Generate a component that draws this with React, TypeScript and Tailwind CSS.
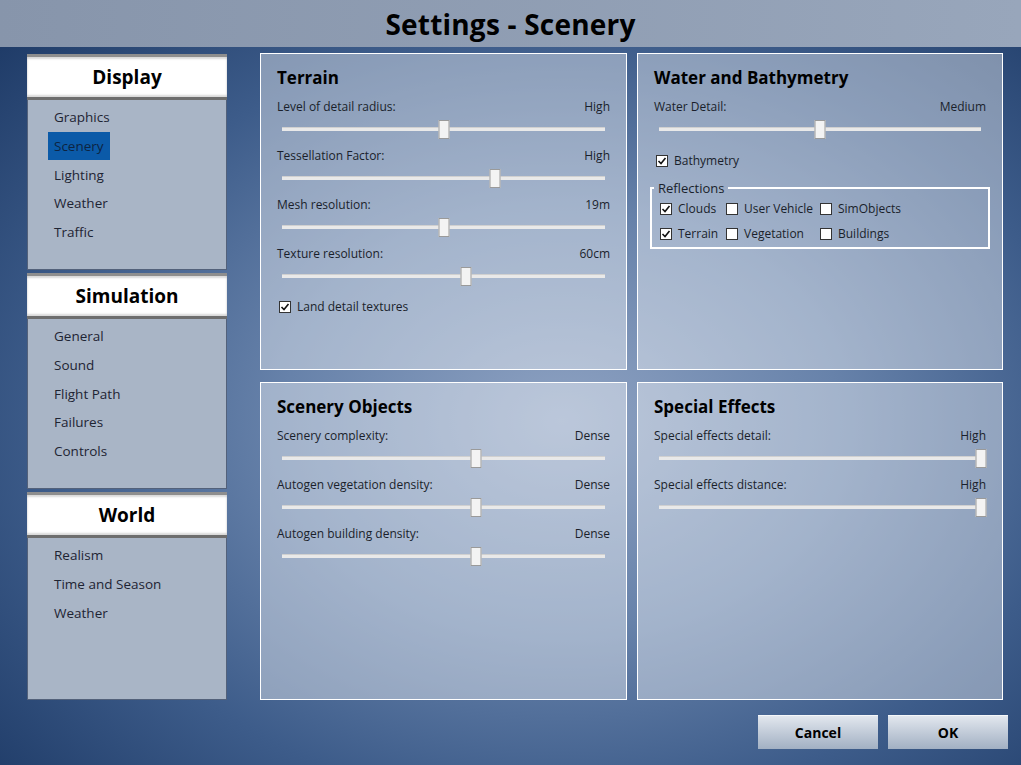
import { ReactNode } from 'react'

const font = { fontFamily: '"Open Sans", "Noto Sans", Arial, sans-serif' }

function SideHeader({ title }: { title: string }) {
  return (
    <div className="h-[46px] flex items-center justify-center bg-white border-t-[3px] border-b-[3px] border-t-[#8e8e8e] border-b-[#6e6e6e] shadow-[inset_0_2px_2px_rgba(0,0,0,0.15),inset_0_-2px_2px_rgba(0,0,0,0.15)]">
      <span className="text-[19px] font-bold text-black">{title}</span>
    </div>
  )
}

function SideList({ items, active, height }: { items: string[]; active?: string; height: string }) {
  return (
    <div className={`${height} bg-[#a9b5c6] border border-[#53617a] border-t-0 pl-[20px] pt-[3px]`}>
      {items.map((it) => (
        <div key={it} className="h-[28.7px] flex items-center">
          <span
            className={`px-[6px] h-[28px] flex items-center text-[13.5px] ${
              it === active ? 'bg-[#0b5aa8] text-[#0d2442]' : 'text-[#1e2433]'
            }`}
          >
            {it}
          </span>
        </div>
      ))}
    </div>
  )
}

function Slider({ label, value, pos }: { label: string; value: string; pos: number }) {
  return (
    <div className="mb-[5px]">
      <div className="h-[16px] flex items-center justify-between text-[12px] text-[#1a1f2b]">
        <span>{label}</span>
        <span>{value}</span>
      </div>
      <div className="relative h-[28px] mx-[5px]">
        <div className="absolute left-0 right-0 top-[12px] h-[4px] bg-[#e9e9e9] border-t border-[#d0d0d0]" />
        <div
          className="absolute top-[5px] w-[11px] h-[19px] bg-[#f3f3f3] border border-[#9a9a9a] -translate-x-1/2"
          style={{ left: `${pos * 100}%` }}
        />
      </div>
    </div>
  )
}

function Check({ label, checked }: { label: string; checked?: boolean }) {
  return (
    <div className="h-[16px] flex items-center gap-[6px] text-[12px] text-[#1a1f2b]">
      <div className="w-[12px] h-[12px] bg-white border border-[#333] flex items-center justify-center">
        {checked && (
          <svg width="10" height="10" viewBox="0 0 10 10">
            <path d="M1.5 5 L4 7.5 L8.5 2" fill="none" stroke="#111" strokeWidth="1.6" />
          </svg>
        )}
      </div>
      <span>{label}</span>
    </div>
  )
}

function Panel({ title, children }: { title: string; children: ReactNode }) {
  return (
    <div className="border border-white bg-white/40 px-[16px] pt-[12px]">
      <div className="h-[24px] flex items-center text-[17px] font-bold text-black">{title}</div>
      <div className="mt-[9px]">{children}</div>
    </div>
  )
}

export default function App() {
  return (
    <div
      className="w-[1021px] h-[765px] flex flex-col overflow-hidden bg-[radial-gradient(ellipse_at_55%_55%,#8ea2c2_0%,#6782aa_35%,#3d5c8a_65%,#1a3662_100%)]"
      style={font}
    >
      <div className="h-[47px] shrink-0 flex items-center justify-center bg-gradient-to-r from-[#8795ab] to-[#98a6bb]">
        <h1 className="text-[28px] font-bold text-black tracking-[0.2px]">Settings - Scenery</h1>
      </div>

      <div className="flex flex-1">
        <div className="ml-[27px] mt-[7px] w-[200px] flex flex-col gap-[3px]">
          <div>
            <SideHeader title="Display" />
            <SideList items={['Graphics', 'Scenery', 'Lighting', 'Weather', 'Traffic']} active="Scenery" height="h-[170px]" />
          </div>
          <div>
            <SideHeader title="Simulation" />
            <SideList items={['General', 'Sound', 'Flight Path', 'Failures', 'Controls']} height="h-[170px]" />
          </div>
          <div>
            <SideHeader title="World" />
            <SideList items={['Realism', 'Time and Season', 'Weather']} height="h-[162px]" />
          </div>
        </div>

        <div className="flex-1 flex flex-col">
          <div className="ml-[33px] mt-[6px] grid grid-cols-[367px_366px] grid-rows-[317px_318px] gap-x-[10px] gap-y-[12px]">
            <Panel title="Terrain">
              <Slider label="Level of detail radius:" value="High" pos={0.5} />
              <Slider label="Tessellation Factor:" value="High" pos={0.66} />
              <Slider label="Mesh resolution:" value="19m" pos={0.5} />
              <Slider label="Texture resolution:" value="60cm" pos={0.57} />
              <div className="mt-[9px] pl-[2px]">
                <Check label="Land detail textures" checked />
              </div>
            </Panel>
            <Panel title="Water and Bathymetry">
              <Slider label="Water Detail:" value="Medium" pos={0.5} />
              <div className="mt-[10px] pl-[2px]">
                <Check label="Bathymetry" checked />
              </div>
              <fieldset className="mt-[10px] -mx-[4px] border-2 border-white h-[70px] pt-[4px]">
                <legend className="ml-[2px] px-[4px] text-[13px] leading-[18px] text-[#1a1f2b]">Reflections</legend>
                <div className="ml-[8px] grid grid-cols-[66px_94px_100px] gap-y-[9px]">
                  <Check label="Clouds" checked />
                  <Check label="User Vehicle" />
                  <Check label="SimObjects" />
                  <Check label="Terrain" checked />
                  <Check label="Vegetation" />
                  <Check label="Buildings" />
                </div>
              </fieldset>
            </Panel>
            <Panel title="Scenery Objects">
              <Slider label="Scenery complexity:" value="Dense" pos={0.6} />
              <Slider label="Autogen vegetation density:" value="Dense" pos={0.6} />
              <Slider label="Autogen building density:" value="Dense" pos={0.6} />
            </Panel>
            <Panel title="Special Effects">
              <Slider label="Special effects detail:" value="High" pos={1} />
              <Slider label="Special effects distance:" value="High" pos={1} />
            </Panel>
          </div>

          <div className="flex justify-end gap-[10px] mr-[13px] mt-[15px]">
            <button className="w-[120px] h-[34px] bg-gradient-to-b from-[#e2e7ee] to-[#a2b0c3] border-t border-[#f5f7fa] text-[14px] font-bold text-black">
              Cancel
            </button>
            <button className="w-[120px] h-[34px] bg-gradient-to-b from-[#e2e7ee] to-[#a2b0c3] border-t border-[#f5f7fa] text-[14px] font-bold text-black">
              OK
            </button>
          </div>
        </div>
      </div>
    </div>
  )
}
